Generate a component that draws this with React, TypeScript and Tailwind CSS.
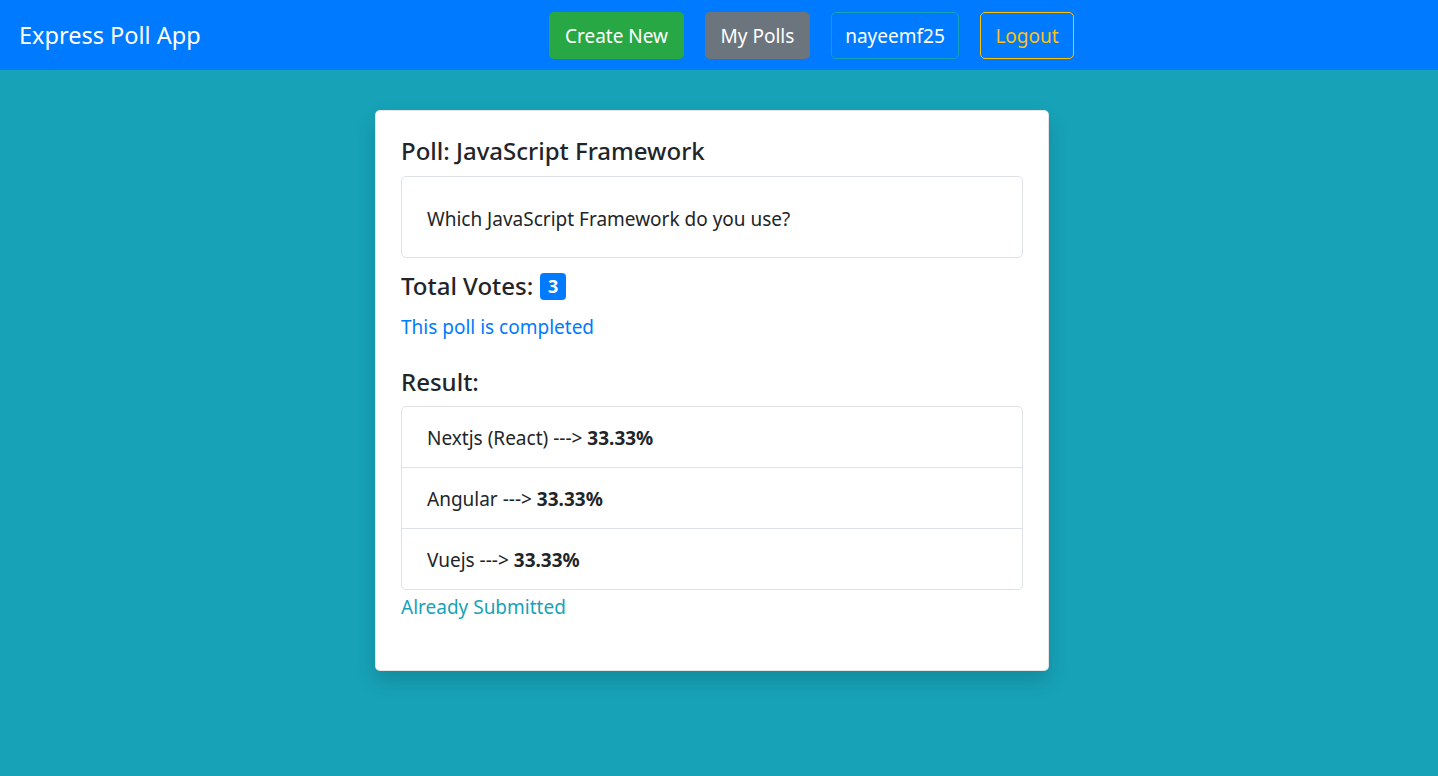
import React from "react";

const results = [
  { name: "Nextjs (React)", pct: "33.33%" },
  { name: "Angular", pct: "33.33%" },
  { name: "Vuejs", pct: "33.33%" },
];

export default function App() {
  return (
    <div
      className="min-h-screen bg-[#17a2b8] text-[#212529]"
      style={{ fontFamily: '"Noto Sans", "Open Sans", sans-serif' }}
    >
      {/* Navbar */}
      <nav className="h-[70px] bg-[#007bff] flex items-center px-[19px]">
        <div className="w-[530px] pt-[3px]">
          <span className="text-white text-[23.5px] leading-none">Express Poll App</span>
        </div>
        <div className="flex items-center gap-[21px] text-[19px]">
          <button className="h-[47px] w-[135px] pt-[2px] rounded-[5px] bg-[#28a745] text-white">
            Create New
          </button>
          <button className="h-[47px] w-[105px] pt-[2px] rounded-[5px] bg-[#6c757d] text-white">
            My Polls
          </button>
          <button className="h-[47px] w-[128px] pt-[2px] rounded-[5px] border border-[#17a2b8] text-white">
            nayeemf25
          </button>
          <button className="h-[47px] w-[94px] pt-[2px] rounded-[5px] border border-[#ffc107] text-[#ffc107]">
            Logout
          </button>
        </div>
      </nav>

      {/* Poll card */}
      <div className="flex justify-center pt-[40px] pr-[14px]">
        <div className="w-[674px] bg-white rounded-[5px] border border-black/10 shadow-[0_10px_20px_rgba(0,0,0,0.15)] px-[25px] pt-[25px] pb-[48px]">
          <h5 className="text-[24px] font-medium leading-[30px] mb-[10px]">
            Poll: JavaScript Framework
          </h5>
          <div className="border border-[#dee2e6] rounded-[5px] px-[25px] pt-[27px] pb-[23px] text-[19px] leading-[30px]">
            Which JavaScript Framework do you use?
          </div>
          <h5 className="mt-[13px] mb-[11px] text-[24px] font-medium leading-[30px] flex items-center">
            Total Votes:
            <span className="ml-[7px] inline-flex items-center justify-center w-[26px] h-[27px] rounded-[4px] bg-[#007bff] text-white text-[18px] font-bold">
              3
            </span>
          </h5>
          <p className="text-[19px] leading-[30px] text-[#007bff]">This poll is completed</p>
          <h5 className="mt-[25px] mb-[9px] text-[24px] font-medium leading-[30px]">Result:</h5>
          <ul className="border border-[#dee2e6] rounded-[5px]">
            {results.map((r, i) => (
              <li
                key={r.name}
                className={`px-[25px] pt-[16px] pb-[14px] text-[19px] leading-[30px] ${
                  i > 0 ? "border-t border-[#dee2e6]" : ""
                }`}
              >
                {r.name} ---&gt; <b className="font-bold">{r.pct}</b>
              </li>
            ))}
          </ul>
          <p className="mt-[2px] text-[19px] leading-[30px] text-[#17a2b8]">Already Submitted</p>
        </div>
      </div>
    </div>
  );
}
